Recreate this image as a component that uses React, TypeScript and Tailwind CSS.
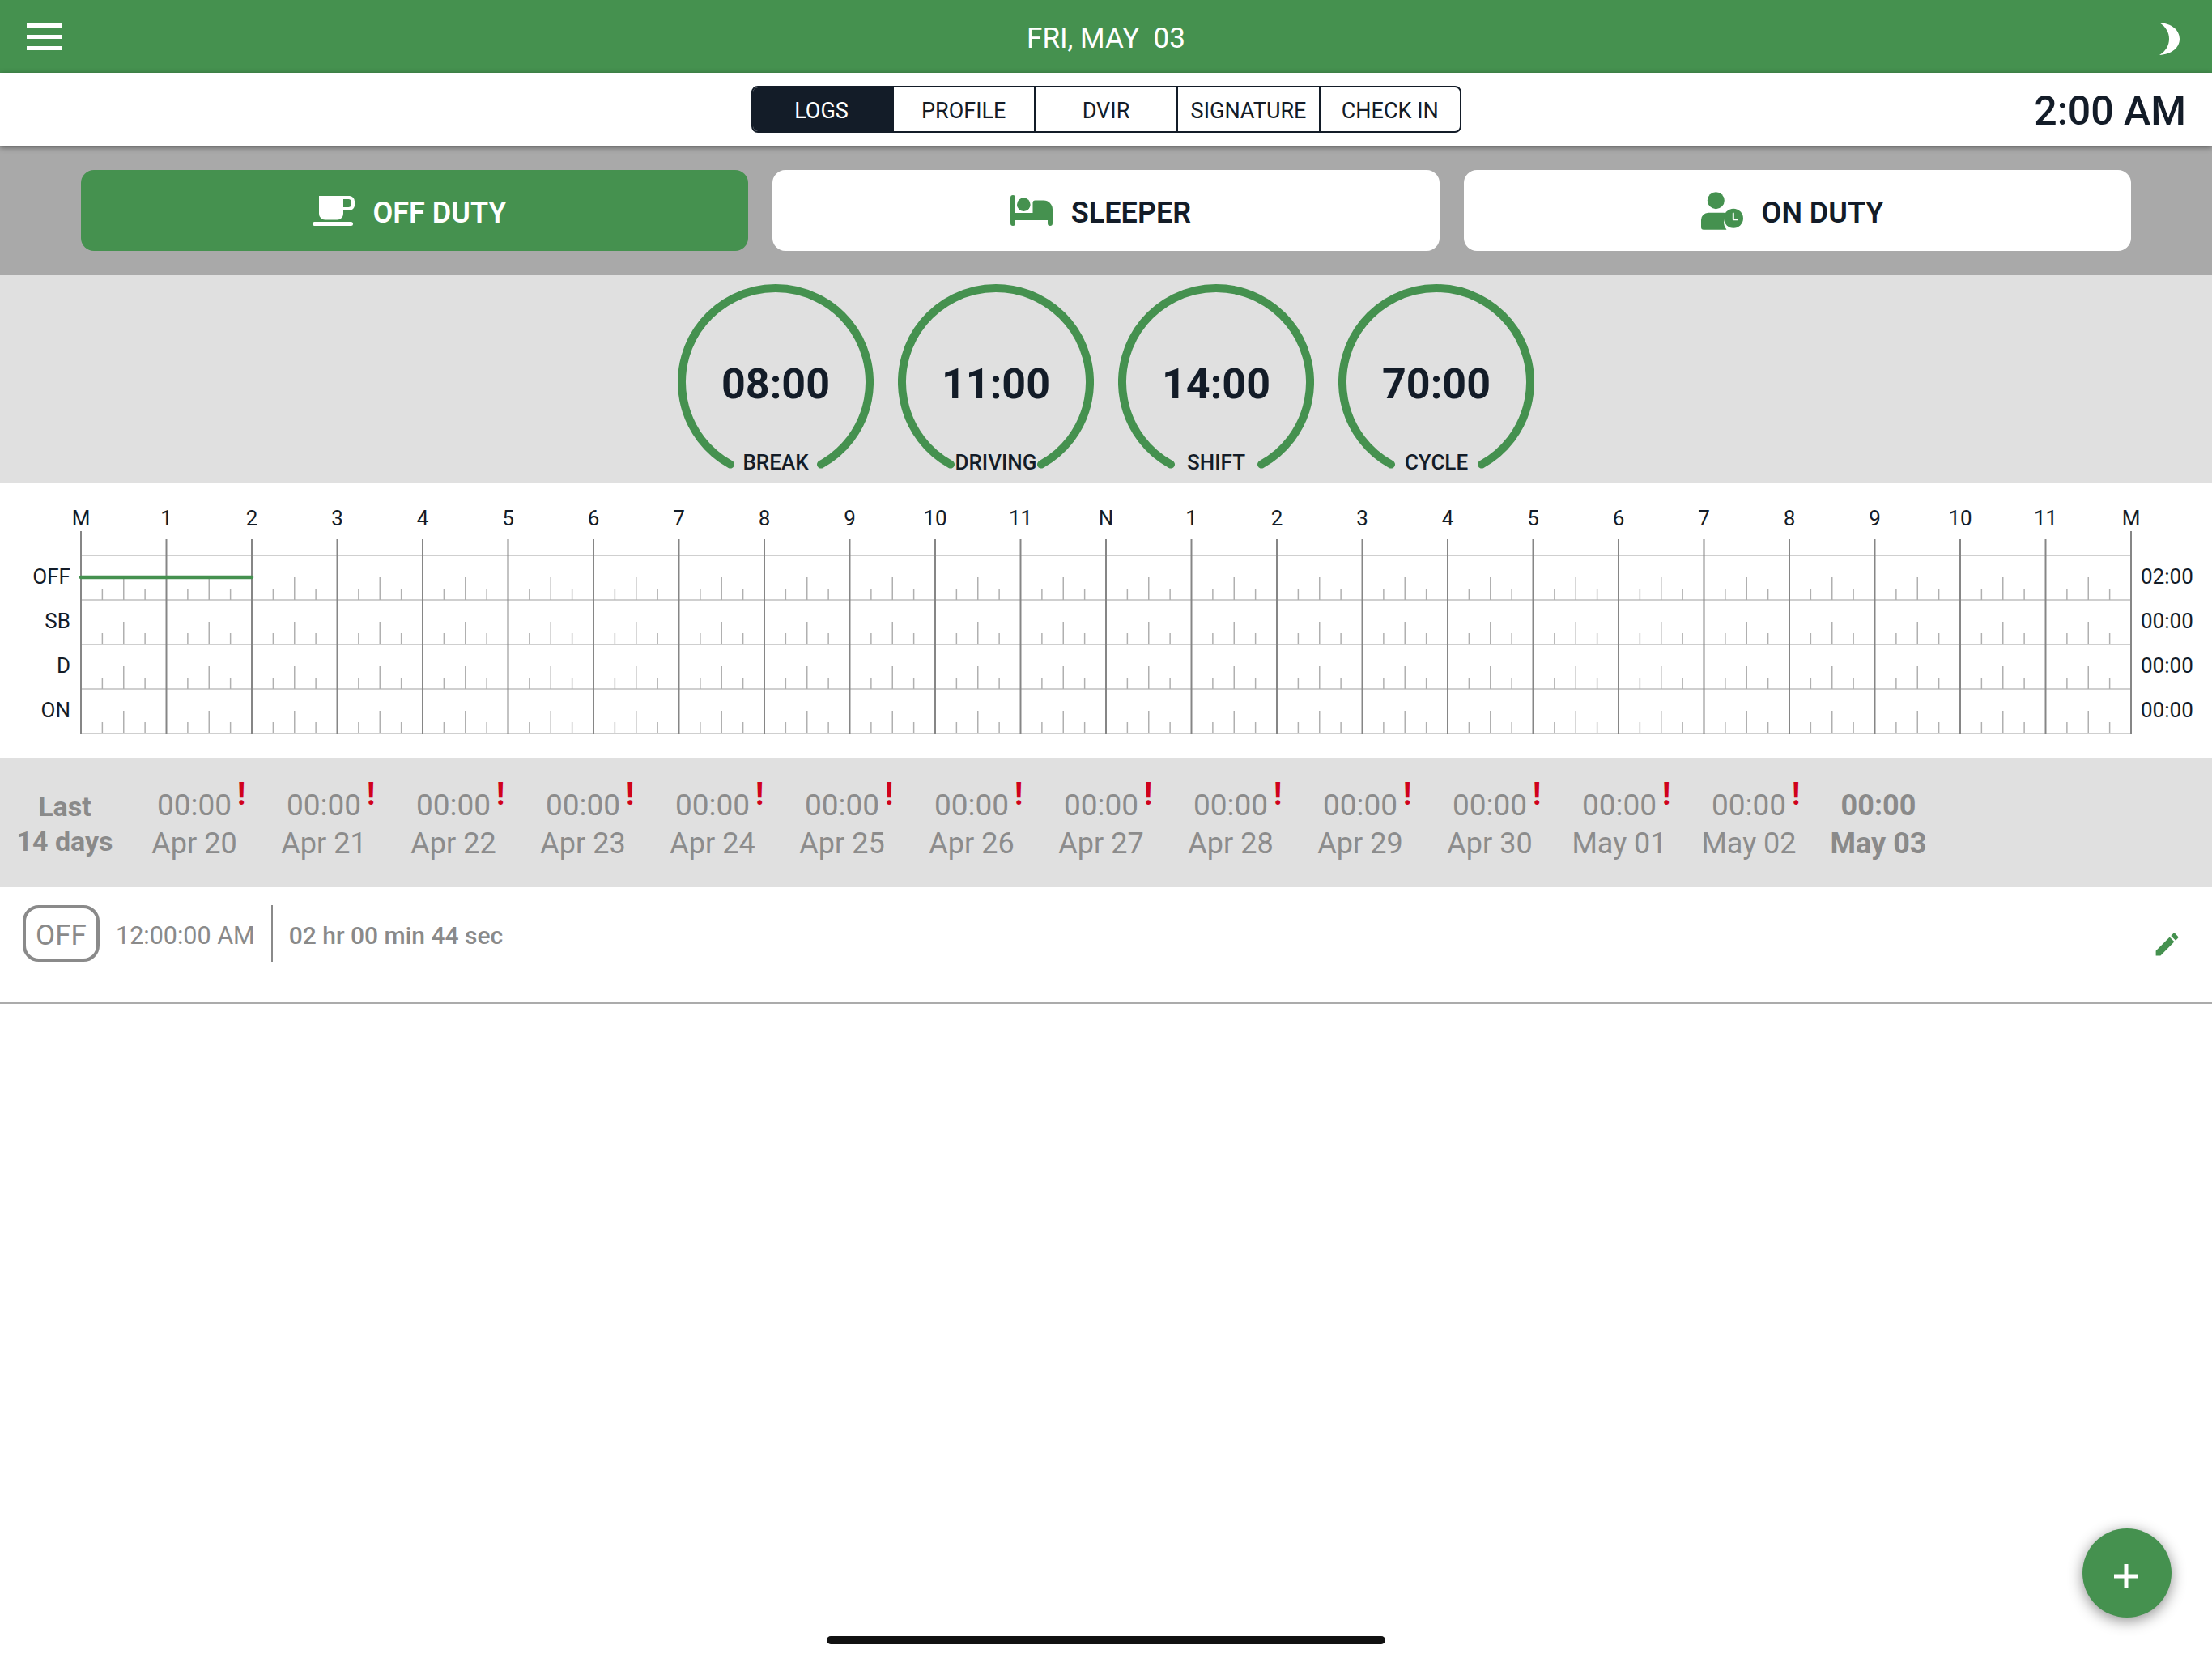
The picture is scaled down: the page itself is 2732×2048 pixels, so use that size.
import React from "react";

const G = "#45914f";
const hours = ["M","1","2","3","4","5","6","7","8","9","10","11","N","1","2","3","4","5","6","7","8","9","10","11","M"];
const rowLabels = ["OFF","SB","D","ON"];
const rowTotals = ["02:00","00:00","00:00","00:00"];
const days = ["Apr 20","Apr 21","Apr 22","Apr 23","Apr 24","Apr 25","Apr 26","Apr 27","Apr 28","Apr 29","Apr 30","May 01","May 02"];
const gauges = [["08:00","BREAK"],["11:00","DRIVING"],["14:00","SHIFT"],["70:00","CYCLE"]];
const HW = 2532 / 24;

function Chart() {
  const X = (x: number) => x + 10;
  const Y = (y: number) => y - 656;
  const ys = [741, 796, 851, 906];
  const lines: React.ReactNode[] = [];
  [686, ...ys].forEach((y) => lines.push(<line key={"h" + y} x1={X(0)} x2={X(2532)} y1={Y(y)} y2={Y(y)} stroke="#cfcfcf" strokeWidth={2} />));
  for (let h = 0; h < 24; h++) {
    ys.forEach((y) => {
      [1, 2, 3].forEach((q) => {
        const x = X(h * HW + (q * HW) / 4);
        lines.push(<line key={`t${h}-${y}-${q}`} x1={x} x2={x} y1={Y(y)} y2={Y(y - (q === 2 ? 28 : 14))} stroke="#b0b0b0" strokeWidth={1.5} />);
      });
    });
  }
  for (let h = 0; h <= 24; h++) {
    const x = X(h * HW);
    lines.push(<line key={"v" + h} x1={x} x2={x} y1={Y(h === 0 || h === 24 ? 656 : 666)} y2={Y(907)} stroke="#868686" strokeWidth={2} />);
  }
  return (
    <svg width={2552} height={252} viewBox="0 0 2552 252" className="block shrink-0">
      {lines}
      <line x1={X(0)} x2={X(2 * HW)} y1={Y(713)} y2={Y(713)} stroke={G} strokeWidth={4.5} strokeLinecap="round" />
    </svg>
  );
}

function Gauge({ value, label }: { value: string; label: string }) {
  return (
    <div className="relative w-[242px] h-[242px] shrink-0">
      <svg width={242} height={242} viewBox="0 0 242 242" className="block">
        <path d="M65 222.6 A116 116 0 1 1 177 222.6" fill="none" stroke={G} strokeWidth={10} strokeLinecap="round" />
      </svg>
      <div className="absolute inset-x-0 top-[95px] text-center text-[52px] leading-[58px] font-bold text-[#131c28]">{value}</div>
      <div className="absolute inset-x-0 top-[206px] text-center text-[26px] leading-[28px] font-medium text-[#131c28]">{label}</div>
    </div>
  );
}

function CoffeeIcon() {
  return (
    <svg width={52} height={37} viewBox="0 0 52 37" className="shrink-0" fill="#fff">
      <path fillRule="evenodd" d="M8 0H45.5A6.5 6.5 0 0 1 52 6.5V11.5A6.5 6.5 0 0 1 45.5 18H38V22A7.5 7.5 0 0 1 30.5 29.5H15.5A7.5 7.5 0 0 1 8 22ZM38 4V14H44.5A3 3 0 0 0 47.5 11V7A3 3 0 0 0 44.5 4Z" />
      <rect x={0} y={32} width={50} height={5} rx={2.5} />
    </svg>
  );
}

function BedIcon() {
  return (
    <svg width={52} height={38} viewBox="0 0 52 38" className="shrink-0" fill={G}>
      <path d="M3 0A3 3 0 0 1 6 3V22H27.5V9.5A3 3 0 0 1 30.5 6.5H41A11 11 0 0 1 52 17.5V35A3 3 0 0 1 46 35V31H6V35A3 3 0 0 1 0 35V3A3 3 0 0 1 3 0Z" />
      <circle cx={16.3} cy={11.7} r={8.3} />
    </svg>
  );
}

function UserClockIcon() {
  return (
    <svg width={52} height={47} viewBox="0 0 52 47" className="shrink-0">
      <circle cx={18.3} cy={10.7} r={10.5} fill={G} />
      <path d="M9 25.7H27.6C29 25.7 30.5 26 32 26.5A15.5 15.5 0 0 0 31.5 46.7H3A3 3 0 0 1 0 43.7V34.7A9 9 0 0 1 9 25.7Z" fill={G} />
      <circle cx={40} cy={32.7} r={12} fill={G} />
      <path d="M39.8 26.5V34.2H45" fill="none" stroke="#fff" strokeWidth={2} strokeLinecap="round" strokeLinejoin="round" />
    </svg>
  );
}

function DutyButton({ active, icon, label }: { active?: boolean; icon: React.ReactNode; label: string }) {
  return (
    <div className={active
      ? "flex-1 h-[100px] rounded-[16px] bg-[#45914f] text-white flex items-center justify-center gap-[23px] pr-[13px]"
      : "flex-1 h-[100px] rounded-[16px] bg-white text-[#131c28] flex items-center justify-center gap-[23px] pr-[13px]"}>
      {icon}
      <span className="text-[36px] leading-[40px] font-semibold pt-[5px]">{label}</span>
    </div>
  );
}

function Stat({ day }: { day: string }) {
  return (
    <div className="w-[160px] shrink-0 flex flex-col items-center pt-[35px] text-[#8c8c8c] text-[36px] leading-[48px]">
      <span className="relative inline-block text-[37px] leading-[47px]">
        00:00
        <span className="absolute left-[7px] top-[-14px] ml-[100%] text-[#d0021b] font-bold text-[38px] leading-[48px]">!</span>
      </span>
      <span>{day}</span>
    </div>
  );
}

export default function App() {
  return (
    <div className="relative w-[2732px] h-[2048px] overflow-hidden bg-white flex flex-col" style={{ fontFamily: "Roboto, sans-serif" }}>
      <header className="h-[90px] bg-[#45914f] grid grid-cols-[1fr_auto_1fr] items-center text-white shrink-0">
        <div className="pl-[33px] flex flex-col gap-[9px] self-start pt-[29px]">
          <div className="w-[44px] h-[5px] bg-white" />
          <div className="w-[44px] h-[5px] bg-white" />
          <div className="w-[44px] h-[5px] bg-white" />
        </div>
        <div className="text-[35px] leading-[40px] whitespace-pre pt-[5px]">FRI, MAY  03</div>
        <div className="justify-self-end pr-[40px] pt-[6px]">
          <svg width={25} height={40} viewBox="0 0 25 40" className="block" fill="#fff">
            <path d="M0 0C15 1 25 9 25 20C25 31 15 39 0 40C8 35 12 28 12 20C12 12 8 5 0 0Z" />
          </svg>
        </div>
      </header>

      <div className="relative z-10 h-[90px] bg-white shadow-[0_2px_7px_rgba(0,0,0,0.45)] grid grid-cols-[1fr_auto_1fr] items-center shrink-0">
        <div />
        <div className="flex h-[58px] w-[877px] rounded-[8px] border-2 border-[#131c28] overflow-hidden text-[27px] leading-[30px] text-[#131c28]">
          <div className="w-[174px] bg-[#131c28] text-white flex items-center justify-center pt-[3px] pr-[4px]">LOGS</div>
          <div className="w-[175.5px] flex items-center justify-center border-r-2 border-[#131c28] pt-[3px]">PROFILE</div>
          <div className="w-[176px] flex items-center justify-center border-r-2 border-[#131c28] pt-[3px]">DVIR</div>
          <div className="w-[176px] flex items-center justify-center border-r-2 border-[#131c28] pt-[3px]">SIGNATURE</div>
          <div className="flex-1 flex items-center justify-center pt-[3px]">CHECK IN</div>
        </div>
        <div className="justify-self-end pr-[32px] pt-[3px] text-[50px] leading-[56px] font-medium text-[#131c28]">2:00 AM</div>
      </div>

      <div className="h-[160px] bg-[#a9a9a9] flex items-center gap-[30px] px-[100px] shrink-0">
        <DutyButton active icon={<CoffeeIcon />} label="OFF DUTY" />
        <DutyButton icon={<BedIcon />} label="SLEEPER" />
        <DutyButton icon={<UserClockIcon />} label="ON DUTY" />
      </div>

      <div className="h-[256px] bg-[#e0e0e0] flex justify-center gap-[30px] pt-[11px] shrink-0">
        {gauges.map(([v, l]) => <Gauge key={l} value={v} label={l} />)}
      </div>

      <div className="h-[340px] bg-white flex flex-col pt-[29px] shrink-0">
        <div className="flex h-[31px] pl-[47.25px] text-[26px] leading-[30px] text-[#131c28]">
          {hours.map((h, i) => (
            <div key={i} className="w-[105.5px] shrink-0 text-center">{h}</div>
          ))}
        </div>
        <div className="flex">
          <div className="w-[90px] shrink-0 flex flex-col pt-[29px] pr-[3px] items-end text-[26px] leading-[55px] text-[#131c28]">
            {rowLabels.map((l) => <div key={l} className="h-[55px]">{l}</div>)}
          </div>
          <Chart />
          <div className="flex flex-col pt-[29px] pl-[2px] text-[26px] leading-[55px] text-[#131c28]">
            {rowTotals.map((l, i) => <div key={i} className="h-[55px]">{l}</div>)}
          </div>
        </div>
      </div>

      <div className="h-[160px] bg-[#e0e0e0] flex shrink-0">
        <div className="w-[160px] shrink-0 flex flex-col items-center pt-[39px] text-[#8a8a8a] text-[34px] leading-[43px] font-bold">
          <span>Last</span>
          <span>14 days</span>
        </div>
        {days.map((d) => <Stat key={d} day={d} />)}
        <div className="w-[160px] shrink-0 flex flex-col items-center pt-[37px] text-[#8a8a8a] text-[36px] leading-[48px] font-bold">
          <span className="leading-[45px]">00:00</span>
          <span>May 03</span>
        </div>
      </div>

      <div className="h-[144px] border-b-2 border-[#ababab] flex items-start justify-between pt-[22px] pl-[28px] pr-[37px] shrink-0">
        <div className="flex items-center h-[70px] text-[#8a8a8a]">
          <div className="w-[95px] h-[70px] rounded-[20px] border-4 border-[#8a8a8a] flex items-center justify-center text-[35px] leading-[40px] pt-[5px]">OFF</div>
          <div className="ml-[20px] text-[30.5px] leading-[36px] pt-[5px]">12:00:00 AM</div>
          <div className="ml-[20px] w-[2px] h-[70px] bg-[#8a8a8a]" />
          <div className="ml-[20px] text-[30px] leading-[36px] font-medium pt-[5px]">02 hr 00 min 44 sec</div>
        </div>
        <svg width={37} height={37} viewBox="0 0 24 24" fill={G} className="mt-[30px] block">
          <path d="M3 17.25V21h3.75L17.81 9.94l-3.75-3.75L3 17.25zM20.71 7.04c.39-.39.39-1.02 0-1.41l-2.34-2.34c-.39-.39-1.02-.39-1.41 0l-1.83 1.83 3.75 3.75 1.83-1.83z" />
        </svg>
      </div>

      <div className="absolute right-[50px] bottom-[50px] w-[110px] h-[110px] rounded-full bg-[#45914f] shadow-[0_4px_18px_rgba(0,0,0,0.45)] flex items-center justify-center">
        <svg width={30} height={30} viewBox="0 0 30 30" className="block mt-[8px] mr-[2px]">
          <path d="M15 0V30M0 15H30" stroke="#fff" strokeWidth={5} fill="none" />
        </svg>
      </div>

      <div className="absolute left-[1021px] bottom-[17px] w-[690px] h-[10px] rounded-full bg-[#111]" />
    </div>
  );
}
